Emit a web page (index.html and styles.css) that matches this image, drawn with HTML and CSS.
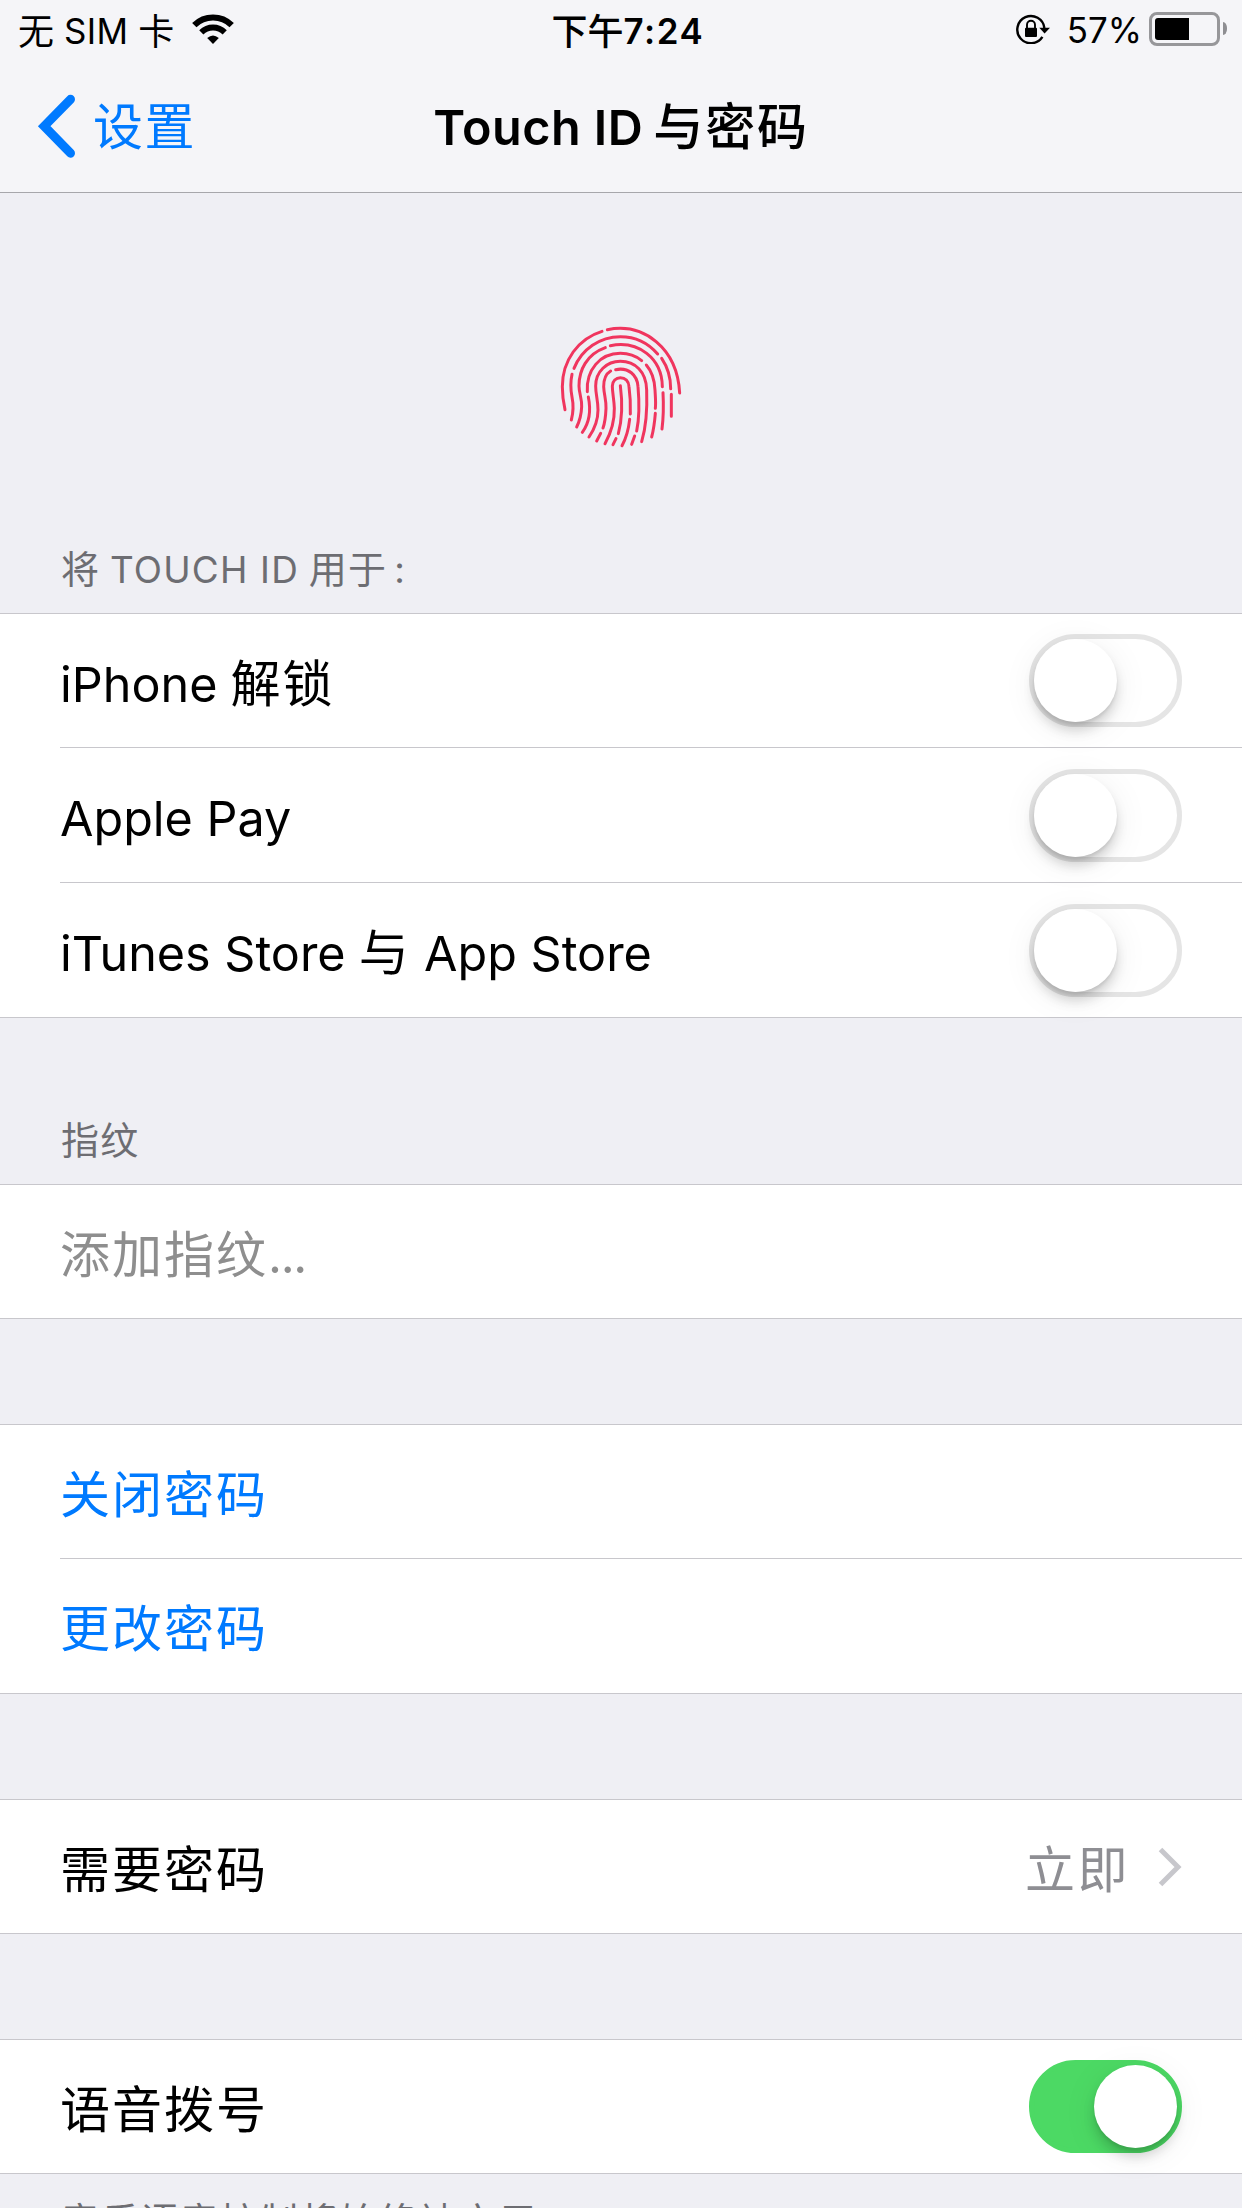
FILE: index.html
```html
<!DOCTYPE html>
<html lang="zh-CN">
<head>
<meta charset="utf-8">
<title>Touch ID 与密码</title>
<link rel="stylesheet" href="styles.css">
</head>
<body>
<header class="top">
  <div class="status">
    <div class="status-left">
      <span class="carrier">无 <span class="latin">SIM</span> 卡</span>
      <svg class="wifi" width="42" height="30" viewBox="0 0 42 30" fill="none" stroke="#000"><path d="M2.3 11.1A26.8 26.8 0 0 1 39.7 11.1" stroke-width="6.2"/><path d="M9.3 18.3A16.8 16.8 0 0 1 32.7 18.3" stroke-width="6"/><path d="M21 30L15.2 24Q21 18.8 26.8 24Z" fill="#000" stroke="none"/></svg>
    </div>
    <div class="time">下午<span class="latin">7:24</span></div>
    <div class="status-right">
      <svg class="rotlock" width="34" height="30" viewBox="0 0 34 30"><path d="M26.4 22.9A13.6 13.6 0 1 1 28.4 14" fill="none" stroke="#000" stroke-width="2.4"/><path d="M23.3 13.8H34L28.6 19.4Z"/><rect x="9" y="13.8" width="12" height="9.2" rx="1"/><path d="M11 14.5V10.8a4 4 0 0 1 8 0V14.5" fill="none" stroke="#000" stroke-width="1.9"/></svg>
      <span class="latin percent">57%</span>
      <div class="battery"><div class="level" style="width:57%"></div></div>
      <div class="nub"></div>
    </div>
  </div>
  <nav class="nav">
    <a class="back"><svg width="40" height="64" viewBox="0 0 40 64" fill="none" stroke="#007aff" stroke-width="9" stroke-linecap="round"><path d="M34.5 5.3L8.2 32.2L34.5 59.2"/></svg><span class="back-label">设置</span></a>
    <h1 class="title"><span class="latin">Touch ID</span> 与密码</h1>
  </nav>
</header>
<main>
  <div class="hero">
    <svg width="142" height="142" viewBox="0 0 426 426" fill="none" stroke="#f0355e" stroke-width="9" stroke-linecap="round">
      <path d="M45 284C40 262 37 240 37 215C37 137 84 71 156 49"/>
      <path d="M172 44C282 22 382 100 389 234"/>
      <path d="M72 160C95 102 150 65 211 65C255 65 295 84 323 117"/>
      <path d="M335 130C352 155 362 190 362 221M364 238V304"/>
      <path d="M66 178C60 205 62 225 66 246C71 270 70 292 64 315"/>
      <path d="M181 92C265 75 336 130 337 215M339 233C341 270 340 310 336 342"/>
      <path d="M166 98C110 118 87 165 87 213C87 235 96 250 95 275C94 300 88 320 80 336"/>
      <path d="M112 230C108 165 150 115 211 115C235 115 258 123 275 137"/>
      <path d="M289 150C308 172 314 200 315 225C316 245 318 262 316 280M316 295C314 320 311 343 305 366"/>
      <path d="M115 246C123 285 119 322 97 352"/>
      <path d="M117 366C135 340 144 312 144 285C144 255 137 240 137 213C137 170 170 139 211 139C255 139 289 170 290 225C292 280 290 330 275 380"/>
      <path d="M182 168C165 178 161 195 161 215C162 240 169 255 168 280C167 305 165 322 159 339M152 355L140 378"/>
      <path d="M197 164C235 156 262 180 264 215C268 260 268 310 260 348M254 363L245 388"/>
      <path d="M165 386C185 350 194 320 193 280C192 250 187 235 187 213C187 198 198 188 211 188C226 188 236 198 237 215C241 245 242 270 241 297M239 313C236 340 228 370 216 392"/>
      <path d="M211 212C216 250 220 300 205 356M198 371L189 389"/>
    </svg>
  </div>
  <h2 class="caption caption-first">将 <span class="latin">TOUCH ID</span> 用于<span class="latin colon">:</span></h2>
  <section class="group">
    <div class="row"><span class="label"><span class="latin">iPhone</span> 解锁</span><span class="switch"></span></div>
    <div class="row"><span class="label"><span class="latin">Apple Pay</span></span><span class="switch"></span></div>
    <div class="row"><span class="label"><span class="latin">iTunes Store</span> 与 <span class="latin">App Store</span></span><span class="switch"></span></div>
  </section>
  <h2 class="caption">指纹</h2>
  <section class="group">
    <div class="row"><span class="label disabled">添加指纹<span class="latin">...</span></span></div>
  </section>
  <section class="group spaced">
    <div class="row"><span class="label link">关闭密码</span></div>
    <div class="row"><span class="label link">更改密码</span></div>
  </section>
  <section class="group spaced">
    <div class="row"><span class="label">需要密码</span><span class="value">立即</span><svg class="chevron" width="24" height="40" viewBox="0 0 24 40" fill="none" stroke="#c7c7cc" stroke-width="5"><path d="M2.5 2.5L20 20L2.5 37.5"/></svg></div>
  </section>
  <section class="group spaced">
    <div class="row"><span class="label">语音拨号</span><span class="switch on"></span></div>
  </section>
  <p class="footnote">音乐语音控制将始终被启用</p>
</main>
</body>
</html>
```
FILE: styles.css
```css
* { box-sizing: border-box; }
body {
  margin: 0;
  width: 1242px;
  height: 2208px;
  overflow: hidden;
  background: #efeff4;
  color: #000;
  font-family: "Noto Sans CJK SC", sans-serif;
  font-size: 50px;
}
h1, h2, p { margin: 0; font-weight: 400; }
svg { display: block; flex: none; }
.latin { font-family: Inter, "Noto Sans CJK SC", sans-serif; font-size: .97em; line-height: 1; }

.top {
  height: 193px;
  background: #f5f5f8;
  border-bottom: 1px solid #a7a7ab;
}
.status {
  height: 60px;
  padding-bottom: 2px;
  display: grid;
  grid-template-columns: 1fr auto 1fr;
  align-items: center;
  font-size: 36px;
  line-height: 58px;
}
.status-left { display: flex; align-items: center; padding-left: 18px; gap: 18px; }
.status .latin { vertical-align: 1px; }
.carrier { word-spacing: 2px; margin-top: -1px; }
.carrier .latin { letter-spacing: .3px; }
.time { font-weight: 500; padding-left: 14px; margin-top: -1px; }
.time .latin { font-weight: 600; letter-spacing: 1.6px; }
.status-right { display: flex; align-items: center; justify-content: flex-end; padding-right: 15px; }
.percent { margin: 3px 7px 0 17px; }
.battery {
  width: 71px;
  height: 34px;
  border: 3px solid #97979a;
  border-radius: 8px;
  padding: 3px;
}
.level { height: 100%; background: #000; border-radius: 3px 0 0 3px; }
.nub { width: 4px; height: 13px; margin-left: 3px; background: #8e8e92; border-radius: 0 4px 4px 0 / 0 6px 6px 0; }

.nav {
  height: 132px;
  display: grid;
  grid-template-columns: 1fr auto 1fr;
  align-items: center;
}
.back { display: flex; align-items: center; padding-left: 36px; gap: 17px; color: #007aff; }
.back-label { padding-bottom: 6px; letter-spacing: 1.5px; }
.title { font-size: 50px; font-weight: 500; padding-bottom: 6px; letter-spacing: 1.8px; word-spacing: -3px; }
.title .latin { font-weight: 600; letter-spacing: .5px; word-spacing: 0; }

.hero { height: 345px; display: flex; justify-content: center; padding-top: 122px; }
.caption {
  height: 166px;
  padding: 92px 61px 0;
  white-space: pre;
  color: #6d6d72;
  font-size: 38px;
  line-height: 56px;
  letter-spacing: 1.2px;
}
.caption-first { height: 75px; padding-top: 1px; }
.colon { padding-left: 7px; }

.group { background: #fff; border-top: 1px solid #c8c7cc; }
.spaced { margin-top: 105px; }
.row {
  height: 135px;
  margin-left: 60px;
  padding-right: 60px;
  display: flex;
  align-items: center;
  border-bottom: 1px solid #c8c7cc;
}
.row:first-child { height: 134px; }
.row:last-child { margin-left: 0; padding-left: 60px; }
.label, .value { padding-bottom: 2px; letter-spacing: 2px; white-space: pre; }
.label { flex: 1; }
.label .latin { letter-spacing: 0; }
.disabled { color: #8e8e8e; }
.disabled .latin { letter-spacing: -1.3px; }
.link { color: #007aff; }
.value { color: #8e8e93; letter-spacing: 2.5px; }
.chevron { margin-left: 28px; }

.switch {
  flex: none;
  width: 153px;
  height: 93px;
  border: 5px solid #e5e5e5;
  border-radius: 47px;
  display: flex;
}
.switch::before {
  content: "";
  width: 83px;
  height: 83px;
  border-radius: 50%;
  background: #fff;
  box-shadow: 0 9px 12px rgba(0,0,0,.15), 0 3px 3px rgba(0,0,0,.08), 0 6px 36px rgba(0,0,0,.07);
}
.on { background: #4cd964; border-color: #4cd964; justify-content: flex-end; }

.footnote {
  padding: 17px 61px 0;
  color: #6d6d72;
  font-size: 38px;
  line-height: 56px;
  letter-spacing: 1.75px;
}
```
